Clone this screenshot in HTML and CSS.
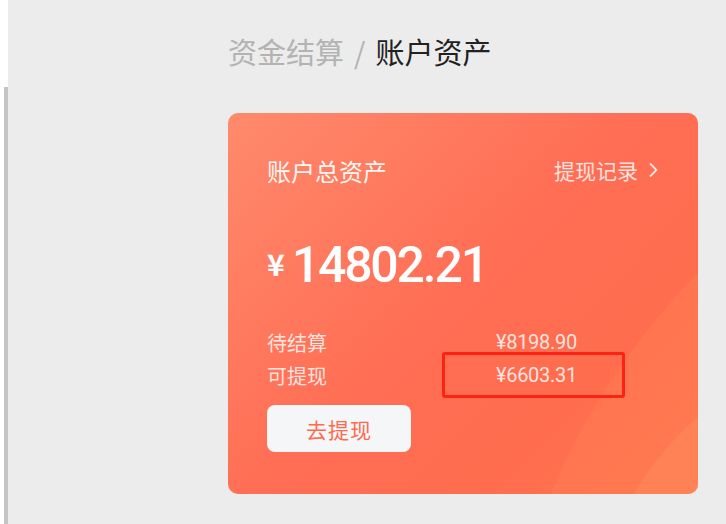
FILE: index.html
```html
<!DOCTYPE html>
<html lang="zh-CN">
<head>
    <meta charset="UTF-8">
    <meta name="viewport" content="width=device-width, initial-scale=1.0">
    <title>账户资产</title>
    <link rel="stylesheet" href="styles.css">
</head>
<body>
    <div class="rail"><div class="rail-bar"></div></div>

    <main class="main">
        <div class="crumbs">
            <span class="crumb-parent">资金结算</span>
            <span class="crumb-sep">/</span>
            <span class="crumb-current">账户资产</span>
        </div>

        <section class="asset-card">
            <svg class="card-waves" viewBox="0 0 470 381" preserveAspectRatio="none" aria-hidden="true">
                <path d="M470 160 C 410 220, 350 310, 323 381 L 470 381 Z" fill="#ff7c52" opacity="0.55"/>
                <path d="M470 304 C 445 325, 420 355, 406 381 L 470 381 Z" fill="#ff8a5c" opacity="0.55"/>
            </svg>

            <div class="card-head">
                <span class="card-title">账户总资产</span>
                <a class="card-link" href="#">提现记录
                    <svg width="10" height="18" viewBox="0 0 10 18"><path d="M2 2.5 L8.5 9 L2 15.5" fill="none" stroke="currentColor" stroke-width="1.8"/></svg>
                </a>
            </div>

            <div class="total">
                <span class="total-sign">¥</span><span class="total-num">14802.21</span>
            </div>

            <div class="balances">
                <span class="bal-label">待结算</span>
                <span class="bal-value">¥8198.90</span>
                <span class="bal-label">可提现</span>
                <span class="bal-value">¥6603.31</span>
            </div>

            <button class="withdraw-btn" type="button">去提现</button>

            <div class="highlight"></div>
        </section>
    </main>
</body>
</html>
```

FILE: styles.css
```css
* {
    box-sizing: border-box;
}

body {
    margin: 0;
    background: #ffffff;
    font-family: "Noto Sans CJK SC", "Noto Sans", sans-serif;
    display: flex;
    min-height: 100vh;
}

.rail {
    width: 8px;
    padding-top: 87px;
    display: flex;
    justify-content: flex-end;
}

.rail-bar {
    width: 4px;
    background: #c4c4c4;
}

.main {
    flex: 1;
    background: #ececec;
    padding: 30px 0 0 220px;
}

.crumbs {
    font-size: 29px;
    line-height: 42px;
    display: flex;
    gap: 10px;
}

.crumb-parent,
.crumb-sep {
    color: #b3b3b3;
}

.crumb-current {
    color: #222222;
}

.asset-card {
    position: relative;
    margin-top: 41px;
    width: 470px;
    height: 381px;
    border-radius: 10px;
    overflow: hidden;
    padding: 42px 39px 0 39px;
    background: linear-gradient(135deg, #ff8a6c 0%, #ff6e55 48%, #ff6d4e 75%, #ff7850 100%);
    color: #ffffff;
}

.card-waves {
    position: absolute;
    left: 0;
    top: 0;
    width: 100%;
    height: 100%;
}

.card-head,
.total,
.balances,
.withdraw-btn {
    position: relative;
}

.card-head {
    display: flex;
    justify-content: space-between;
    align-items: center;
    height: 30px;
}

.card-title {
    font-size: 24px;
    color: rgba(255, 255, 255, 0.95);
}

.card-link {
    display: flex;
    align-items: center;
    gap: 10px;
    font-size: 21px;
    color: rgba(255, 255, 255, 0.82);
    text-decoration: none;
    margin-right: 1px;
}

.total {
    margin-top: 60px;
    display: flex;
    align-items: flex-start;
    height: 52px;
}

.total-sign {
    font-size: 30px;
    font-weight: 700;
    line-height: 36px;
    margin-right: 7px;
}

.total-num {
    font-family: "Roboto", "Noto Sans", sans-serif;
    font-size: 50px;
    font-weight: 500;
    line-height: 40px;
    letter-spacing: -2.2px;
}

.balances {
    margin-top: 29px;
    display: grid;
    grid-template-columns: 229px auto;
    font-size: 20px;
    line-height: 33px;
    color: rgba(255, 255, 255, 0.82);
}

.bal-value {
    font-family: "Roboto", "Noto Sans", sans-serif;
    font-size: 20px;
    letter-spacing: -0.3px;
}

.withdraw-btn {
    margin-top: 13px;
    width: 144px;
    height: 47px;
    border: none;
    border-radius: 8px;
    background: #f5f6f8;
    color: #ff6a4f;
    font-family: inherit;
    font-size: 21px;
    letter-spacing: 1px;
}

.highlight {
    position: absolute;
    left: 214px;
    top: 239px;
    width: 183px;
    height: 46px;
    border: 3px solid #ff2112;
    border-radius: 3px;
}
```
